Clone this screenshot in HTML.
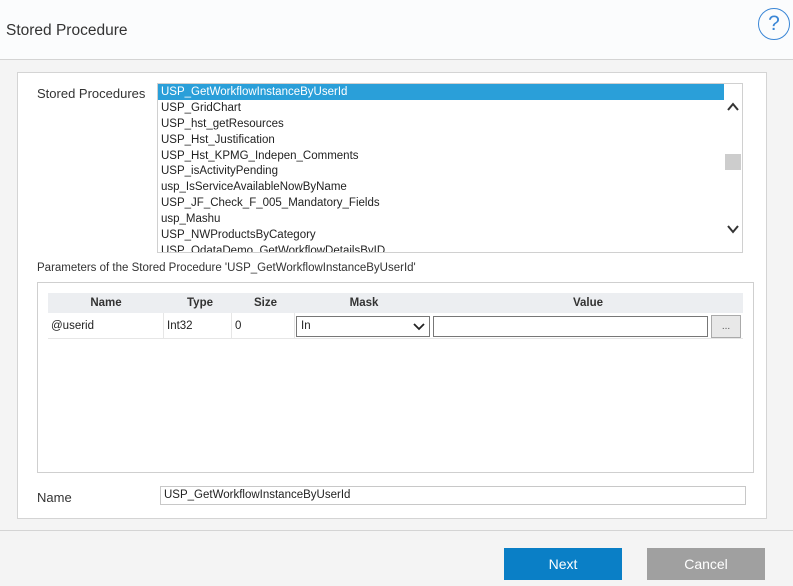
<!DOCTYPE html>
<html><head><meta charset="utf-8"><style>
*{box-sizing:border-box;margin:0;padding:0}
body{width:793px;height:586px;background:#f4f4f4;font-family:"Liberation Sans",sans-serif;font-size:12px;color:#222;position:relative;overflow:hidden}
.abs{position:absolute}
#hdr{left:0;top:0;width:793px;height:60px;background:#fbfcfd;border-bottom:1px solid #d4d4d4}
#title{left:6px;top:22px;font-size:15.5px;color:#333}
#help{left:758px;top:8px;width:32px;height:32px;border:1.2px solid #3a86d6;border-radius:50%;color:#3a86d6;font-size:21px;text-align:center;line-height:30px;font-weight:300}
#panel{left:17px;top:72px;width:750px;height:447px;background:#fff;border:1px solid #d4d4d4}
.lbl{font-size:13px;color:#333}
#list{left:157px;top:83px;width:586px;height:170px;border:1px solid #d0d0d0;overflow:hidden;background:#fff}
#list div.r{height:15.9px;line-height:17px;padding-left:3px;font-size:11.5px;white-space:nowrap}
#list div.sel{background:#2a9fd9;color:#fff}
#sb{left:724px;top:84px;width:18px;height:168px;background:#fff}
#pbox{left:37px;top:282px;width:717px;height:191px;border:1px solid #cfcfcf;background:#fff}
.th{top:293px;height:20px;background:#eceef1;font-weight:bold;font-size:11.5px;text-align:center;line-height:20px;color:#333}
.td{top:313px;height:26px;line-height:26px;font-size:11.5px;border-bottom:1px solid #e6e6e6;padding-left:3px}
.btn{top:548px;width:118px;height:32px;color:#fff;font-size:14px;text-align:center;line-height:32px}
</style></head><body>
<div id="hdr" class="abs"></div>
<div id="title" class="abs">Stored Procedure</div>
<div id="help" class="abs">?</div>
<div id="panel" class="abs"></div>
<div class="abs lbl" style="left:37px;top:86px">Stored Procedures</div>
<div id="list" class="abs">
<div class="r sel">USP_GetWorkflowInstanceByUserId</div>
<div class="r">USP_GridChart</div>
<div class="r">USP_hst_getResources</div>
<div class="r">USP_Hst_Justification</div>
<div class="r">USP_Hst_KPMG_Indepen_Comments</div>
<div class="r">USP_isActivityPending</div>
<div class="r">usp_IsServiceAvailableNowByName</div>
<div class="r">USP_JF_Check_F_005_Mandatory_Fields</div>
<div class="r">usp_Mashu</div>
<div class="r">USP_NWProductsByCategory</div>
<div class="r">USP_OdataDemo_GetWorkflowDetailsByID</div>
</div>
<div id="sb" class="abs">
<svg width="18" height="168" style="position:absolute;left:0;top:0">
<path d="M4 26 L9 20 L14 26" stroke="#333" stroke-width="2" fill="none"/>
<rect x="1" y="70" width="16" height="16" fill="#cdcdcd"/>
<path d="M4 142 L9 148 L14 142" stroke="#333" stroke-width="2" fill="none"/>
</svg></div>
<div class="abs" style="left:37px;top:262px;font-size:11.5px;color:#333">Parameters of the Stored Procedure 'USP_GetWorkflowInstanceByUserId'</div>
<div id="pbox" class="abs"></div>
<div class="abs th" style="left:48px;width:116px">Name</div>
<div class="abs th" style="left:164px;width:72px">Type</div>
<div class="abs th" style="left:236px;width:59px">Size</div>
<div class="abs th" style="left:295px;width:138px">Mask</div>
<div class="abs th" style="left:433px;width:310px">Value</div>
<div class="abs td" style="left:48px;width:116px;border-right:1px solid #e6e6e6">@userid</div>
<div class="abs td" style="left:164px;width:68px;border-right:1px solid #e6e6e6">Int32</div>
<div class="abs td" style="left:232px;width:63px;border-right:1px solid #e6e6e6">0</div>
<div class="abs td" style="left:295px;width:448px"></div>
<div class="abs" style="left:296px;top:316px;width:134px;height:21px;border:1px solid #777;background:#fff;font-size:11.5px;line-height:19px;padding-left:4px">In
<svg width="12" height="8" style="position:absolute;right:4px;top:6px"><path d="M1 1 L6 6 L11 1" stroke="#222" stroke-width="1.8" fill="none"/></svg></div>
<div class="abs" style="left:433px;top:316px;width:275px;height:21px;border:1px solid #777;background:#fff"></div>
<div class="abs" style="left:711px;top:315px;width:30px;height:23px;border:1px solid #aaa;background:#e8e8e8;font-size:10px;text-align:center;line-height:22px;color:#555">...</div>
<div class="abs lbl" style="left:37px;top:490px">Name</div>
<div class="abs" style="left:160px;top:486px;width:586px;height:19px;border:1px solid #c8c8c8;background:#fff;font-size:11.5px;line-height:17px;padding-left:3px">USP_GetWorkflowInstanceByUserId</div>
<div class="abs" style="left:0;top:530px;width:793px;height:1px;background:#d4d4d4"></div>
<div class="abs btn" style="left:504px;background:#0a7fc6">Next</div>
<div class="abs btn" style="left:647px;background:#a0a0a0">Cancel</div>
</body></html>
